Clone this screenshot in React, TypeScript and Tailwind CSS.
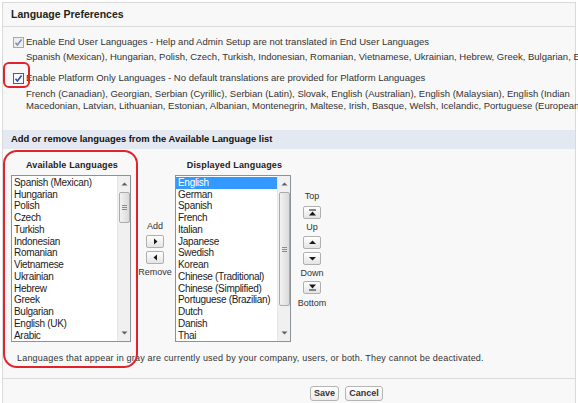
import React from "react";

const available = [
  "Spanish (Mexican)",
  "Hungarian",
  "Polish",
  "Czech",
  "Turkish",
  "Indonesian",
  "Romanian",
  "Vietnamese",
  "Ukrainian",
  "Hebrew",
  "Greek",
  "Bulgarian",
  "English (UK)",
  "Arabic",
];

const displayed = [
  "English",
  "German",
  "Spanish",
  "French",
  "Italian",
  "Japanese",
  "Swedish",
  "Korean",
  "Chinese (Traditional)",
  "Chinese (Simplified)",
  "Portuguese (Brazilian)",
  "Dutch",
  "Danish",
  "Thai",
];

function Checkbox({ disabled }: { disabled?: boolean }) {
  return (
    <svg width="11" height="11" viewBox="0 0 11 11" className="shrink-0">
      <rect
        x="0.5"
        y="0.5"
        width="10"
        height="10"
        fill={disabled ? "#eeeeee" : "#f7f9fc"}
        stroke={disabled ? "#a9a9a9" : "#4f5d73"}
      />
      <path
        d="M2.5 5.8 L4.4 8 L8.6 2.6"
        fill="none"
        stroke={disabled ? "#7d90b5" : "#2a4fa8"}
        strokeWidth="1.6"
      />
    </svg>
  );
}

type Glyph = "right" | "left" | "up" | "down" | "top" | "bottom";

function ArrowGlyph({ kind }: { kind: Glyph }) {
  const c = "#1a1a1a";
  return (
    <svg width="9" height="7" viewBox="0 0 9 7">
      {kind === "right" && <polygon points="3,0.5 6.5,3.5 3,6.5" fill={c} />}
      {kind === "left" && <polygon points="6,0.5 2.5,3.5 6,6.5" fill={c} />}
      {kind === "up" && <polygon points="1,5 8,5 4.5,1.5" fill={c} />}
      {kind === "down" && <polygon points="1,2 8,2 4.5,5.5" fill={c} />}
      {kind === "top" && (
        <>
          <rect x="1" y="0.5" width="7" height="1" fill={c} />
          <polygon points="1,6.5 8,6.5 4.5,2.5" fill={c} />
        </>
      )}
      {kind === "bottom" && (
        <>
          <polygon points="1,0.5 8,0.5 4.5,4.5" fill={c} />
          <rect x="1" y="5.5" width="7" height="1" fill={c} />
        </>
      )}
    </svg>
  );
}

function ArrowButton({ kind, className = "" }: { kind: Glyph; className?: string }) {
  return (
    <button
      className={`flex h-[13px] w-[18px] items-center justify-center rounded-[2px] border border-[#b0b0b0] bg-gradient-to-b from-white to-[#e4e4e4] ${className}`}
    >
      <ArrowGlyph kind={kind} />
    </button>
  );
}

function ListBox({
  items,
  selected,
  thumbHeight,
  width,
}: {
  items: string[];
  selected?: number;
  thumbHeight: number;
  width: string;
}) {
  return (
    <div className={`flex h-[167px] ${width} border border-[#8d9198] bg-white`}>
      <div className="flex-1 overflow-hidden pt-px font-['Liberation_Sans',Arial,sans-serif] text-[10px] leading-[11.73px] tracking-[-0.3px] text-[#1b1b1b]">
        {items.map((item, i) => (
          <div
            key={item}
            className={`whitespace-nowrap pl-[2px] ${
              i === selected ? "bg-[#3399ff] text-white" : ""
            }`}
          >
            {item}
          </div>
        ))}
      </div>
      <div className="flex w-[13px] flex-col border-l border-[#e6e6e6] bg-[#f0f0f0]">
        <div className="flex h-[16px] items-center justify-center">
          <svg width="7" height="4" viewBox="0 0 7 4">
            <polygon points="0.5,3.5 6.5,3.5 3.5,0.5" fill="#606060" />
          </svg>
        </div>
        <div className="flex-1">
          <div
            className="mx-auto flex w-[11px] flex-col items-center justify-center gap-[1px] rounded-[2px] border border-[#ababab] bg-gradient-to-r from-[#f2f2f2] to-[#dadada]"
            style={{ height: thumbHeight }}
          >
            <div className="h-px w-[5px] bg-[#8a8a8a]" />
            <div className="h-px w-[5px] bg-[#8a8a8a]" />
            <div className="h-px w-[5px] bg-[#8a8a8a]" />
          </div>
        </div>
        <div className="flex h-[16px] items-center justify-center">
          <svg width="7" height="4" viewBox="0 0 7 4">
            <polygon points="0.5,0.5 6.5,0.5 3.5,3.5" fill="#606060" />
          </svg>
        </div>
      </div>
    </div>
  );
}

export default function App() {
  return (
    <div className="relative h-[403px] w-[578px] overflow-hidden bg-white font-['Liberation_Sans',Arial,sans-serif] text-[#333]">
      <div className="ml-[2px] mt-[2px] h-[420px] w-[574px] border-l border-r border-t border-[#dadada] bg-[#f8f8f8]">
        {/* page title */}
        <div className="flex h-[24px] items-center border-b border-[#dcdcdc] pl-[8px] text-[10.5px] font-bold text-[#222]">
          Language Preferences
        </div>

        {/* language settings */}
        <div className="pl-[10px] text-[9.5px] leading-[12px]">
          <div className="mt-[9px] flex items-center gap-[2px]">
            <Checkbox disabled />
            <span className="whitespace-nowrap">
              Enable End User Languages - Help and Admin Setup are not translated in End User Languages
            </span>
          </div>
          <div className="mt-[3px] whitespace-nowrap pl-[13px]">
            Spanish (Mexican), Hungarian, Polish, Czech, Turkish, Indonesian, Romanian, Vietnamese, Ukrainian,
            Hebrew, Greek, Bulgarian, English (UK), Arabic
          </div>
          <div className="mt-[9px] flex items-center gap-[2px]">
            <Checkbox />
            <span className="whitespace-nowrap">
              Enable Platform Only Languages - No default translations are provided for Platform Languages
            </span>
          </div>
          <div className="mt-[4px] whitespace-nowrap pl-[13px]">
            French (Canadian), Georgian, Serbian (Cyrillic), Serbian (Latin), Slovak, English (Australian),
            English (Malaysian), English (Indian
          </div>
          <div className="whitespace-nowrap pl-[13px]">
            Macedonian, Latvian, Lithuanian, Estonian, Albanian, Montenegrin, Maltese, Irish, Basque, Welsh,
            Icelandic, Portuguese (European)
          </div>
        </div>

        {/* section header */}
        <div className="mt-[18px] flex h-[19px] items-center bg-[#e4e8f0] pl-[8px] text-[9.4px] font-bold text-[#111]">
          Add or remove languages from the Available Language list
        </div>

        {/* language pickers */}
        <div className="flex pl-[8px]">
          <div className="flex w-[120px] flex-col">
            <div className="mt-[9px] h-[14px] pl-[2px] text-center text-[9px] font-bold leading-[14px] tracking-[0.15px] text-[#222]">
              Available Languages
            </div>
            <div className="mt-[3px]">
              <ListBox items={available} thumbHeight={31} width="w-[120px]" />
            </div>
          </div>

          <div className="flex w-[44px] flex-col items-center pl-[4px] text-[9px] leading-[12px]">
            <div className="mt-[71px]">Add</div>
            <ArrowButton kind="right" className="mt-[3px]" />
            <ArrowButton kind="left" className="mt-[3px]" />
            <div className="mt-[2px]">Remove</div>
          </div>

          <div className="flex w-[116px] flex-col">
            <div className="mt-[9px] h-[14px] pl-[3px] text-center text-[9px] font-bold leading-[14px] tracking-[0.15px] text-[#222]">
              Displayed Languages
            </div>
            <div className="mt-[3px]">
              <ListBox items={displayed} selected={0} thumbHeight={114} width="w-[116px]" />
            </div>
          </div>

          <div className="flex w-[42px] flex-col items-center text-[9px] leading-[12px]">
            <div className="mt-[41px]">Top</div>
            <ArrowButton kind="top" className="mt-[4px]" />
            <div className="mt-[2px]">Up</div>
            <ArrowButton kind="up" className="mt-[3px]" />
            <ArrowButton kind="down" className="mt-[3px]" />
            <div className="mt-[2px]">Down</div>
            <ArrowButton kind="bottom" className="mt-[2px]" />
            <div className="mt-[3px]">Bottom</div>
          </div>
        </div>

        <div className="mt-[10px] whitespace-nowrap pl-[14px] text-[9px] leading-[12px] tracking-[0.2px]">
          Languages that appear in gray are currently used by your company, users, or both. They cannot be
          deactivated.
        </div>

        {/* form actions */}
        <div className="mt-[14px] flex gap-[6px] border-t border-[#dcdcdc] pl-[307px] pt-[7px]">
          <button className="h-[15px] w-[29px] rounded-[3px] border border-[#b5b5b5] bg-gradient-to-b from-white to-[#ededed] text-[9px] font-bold text-[#333]">
            Save
          </button>
          <button className="h-[15px] w-[38px] rounded-[3px] border border-[#b5b5b5] bg-gradient-to-b from-white to-[#ededed] text-[9px] font-bold text-[#333]">
            Cancel
          </button>
        </div>
      </div>

      {/* red highlight marks */}
      <div className="absolute left-[3px] top-[62px] h-[26px] w-[27px] rounded-[6px] border-2 border-[#e2232c]" />
      <div className="absolute left-[3px] top-[150px] h-[218px] w-[135px] rounded-[14px] border-2 border-[#e2232c]" />
    </div>
  );
}
